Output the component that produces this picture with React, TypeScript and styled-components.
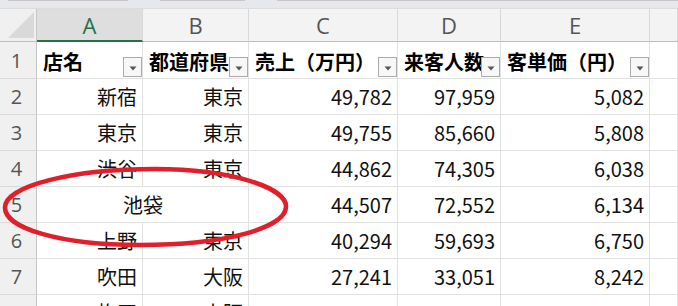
import React from 'react';
import styled, { createGlobalStyle } from "styled-components";

const GlobalStyle = createGlobalStyle`
  html, body {
    margin: 0;
    padding: 0;
    background: #ffffff;
    overflow: hidden;
  }
  body {
    font-family: "Noto Sans CJK JP", "Noto Sans", sans-serif;
  }
`

const columns = ['A', 'B', 'C', 'D', 'E', ''];
const headers = ['店名', '都道府県', '売上（万円）', '来客人数', '客単価（円）'];

type Row = { num: number; shop: string; pref?: string; sales: string; visitors: string; price: string; merged?: boolean };

const rows: Row[] = [
    { num: 2, shop: '新宿', pref: '東京', sales: '49,782', visitors: '97,959', price: '5,082' },
    { num: 3, shop: '東京', pref: '東京', sales: '49,755', visitors: '85,660', price: '5,808' },
    { num: 4, shop: '渋谷', pref: '東京', sales: '44,862', visitors: '74,305', price: '6,038' },
    { num: 5, shop: '池袋', sales: '44,507', visitors: '72,552', price: '6,134', merged: true },
    { num: 6, shop: '上野', pref: '東京', sales: '40,294', visitors: '59,693', price: '6,750' },
    { num: 7, shop: '吹田', pref: '大阪', sales: '27,241', visitors: '33,051', price: '8,242' },
    { num: 8, shop: '梅田', pref: '大阪', sales: '', visitors: '', price: '' },
];

export default function App() {
    return (
        <>
            <GlobalStyle/>
            <StyledPage>
                <StyledTopStrip>
                    <StyledBoxEdge $w={120}/>
                    <StyledBoxEdge $w={85}/>
                    <StyledBoxEdge $w={420}/>
                </StyledTopStrip>
                <StyledSheet>
                    <StyledCorner>
                        <svg width="28" height="28" viewBox="0 0 28 28">
                            <polygon points="27,1 27,27 1,27" fill="#d9d9d9"/>
                        </svg>
                    </StyledCorner>
                    {columns.map((c, i) => (
                        <StyledColHead key={i} $selected={c === 'A'}>{c}</StyledColHead>
                    ))}

                    <StyledRowHead>1</StyledRowHead>
                    {headers.map((h, i) => (
                        <StyledTitleCell key={i}>
                            <span>{h}</span>
                            <StyledFilter>
                                <svg width="8" height="5" viewBox="0 0 8 5">
                                    <polygon points="0.5,0.5 7.5,0.5 4,4.5" fill="#555"/>
                                </svg>
                            </StyledFilter>
                        </StyledTitleCell>
                    ))}
                    <StyledCell/>

                    {rows.map(r => (
                        <React.Fragment key={r.num}>
                            <StyledRowHead>{r.num}</StyledRowHead>
                            {r.merged
                                ? <StyledCell $align="center" $span={2}>{r.shop}</StyledCell>
                                : <>
                                    <StyledCell $align="right">{r.shop}</StyledCell>
                                    <StyledCell $align="right">{r.pref}</StyledCell>
                                </>}
                            <StyledCell $align="right">{r.sales}</StyledCell>
                            <StyledCell $align="right">{r.visitors}</StyledCell>
                            <StyledCell $align="right">{r.price}</StyledCell>
                            <StyledCell/>
                        </React.Fragment>
                    ))}
                </StyledSheet>
                <StyledMark width="300" height="100" viewBox="0 0 300 100">
                    <path d="M155 3 C 232 3, 287 22, 286 41 C 285 62, 225 79, 140 79 C 60 79, 4 62, 5 41 C 6 20, 72 3, 155 3 Z"
                          fill="none" stroke="#e01f2b" strokeWidth="4.6"/>
                </StyledMark>
            </StyledPage>
        </>
    );
}

const StyledPage = styled.div`
  position: relative;
  width: 678px;
  height: 306px;
  overflow: hidden;
  background: #ffffff;
`
const StyledTopStrip = styled.div`
  height: 9px;
  background: #e6e8ed;
  display: flex;
  gap: 32px;
  padding-left: 8px;
  box-sizing: border-box;
  border-bottom: 1px solid #dcdcdc;
`
const StyledBoxEdge = styled.div<{ $w: number }>`
  width: ${p => p.$w}px;
  height: 1px;
  background: #c8c8c8;
  flex: ${p => p.$w > 300 ? 1 : 'none'};
`
const StyledSheet = styled.div`
  display: grid;
  grid-template-columns: 37px 106px 106px 149px 103px 149px 1fr;
  grid-template-rows: 33px 37px repeat(7, 36px);
`
const StyledCorner = styled.div`
  background: #f0f0f0;
  border-right: 1px solid #c6c6c6;
  border-bottom: 1px solid #bdbdbd;
  display: flex;
  align-items: flex-end;
  justify-content: flex-end;
  padding: 0 1px 2px 0;
`
const StyledColHead = styled.div<{ $selected?: boolean }>`
  background: ${p => p.$selected ? '#dedede' : '#f3f3f3'};
  color: ${p => p.$selected ? '#217346' : '#555555'};
  border-right: 1px solid #d8d8d8;
  border-bottom: ${p => p.$selected ? '2px solid #217346' : '1px solid #bdbdbd'};
  font-family: "Open Sans", "Noto Sans", sans-serif;
  font-size: 22px;
  display: flex;
  align-items: center;
  justify-content: center;
`
const StyledRowHead = styled.div`
  background: #f0f0f0;
  color: #555555;
  border-right: 1px solid #c6c6c6;
  border-bottom: 1px solid #d9d9d9;
  font-family: "Open Sans", "Noto Sans", sans-serif;
  font-size: 20px;
  display: flex;
  align-items: center;
  justify-content: center;
  padding-right: 3px;
`
const StyledCell = styled.div<{ $align?: string; $span?: number }>`
  grid-column: span ${p => p.$span || 1};
  border-right: 1px solid #e1e1e1;
  border-bottom: 1px solid #e1e1e1;
  font-size: 20px;
  color: #111111;
  display: flex;
  align-items: center;
  justify-content: ${p => p.$align === 'right' ? 'flex-end' : p.$align === 'center' ? 'center' : 'flex-start'};
  padding: 0 5px 0 6px;
  white-space: nowrap;
  overflow: hidden;
`
const StyledTitleCell = styled(StyledCell)`
  position: relative;
  font-weight: 700;
  color: #000000;
  overflow: visible;
  padding-top: 2px;
`
const StyledFilter = styled.div`
  position: absolute;
  right: 0;
  bottom: 1px;
  width: 19px;
  height: 20px;
  box-sizing: border-box;
  border: 1px solid #ababab;
  background: #f7f7f7;
  display: flex;
  align-items: center;
  justify-content: center;
  padding-top: 2px;
`
const StyledMark = styled.svg`
  position: absolute;
  left: 0;
  top: 166px;
  pointer-events: none;
`
